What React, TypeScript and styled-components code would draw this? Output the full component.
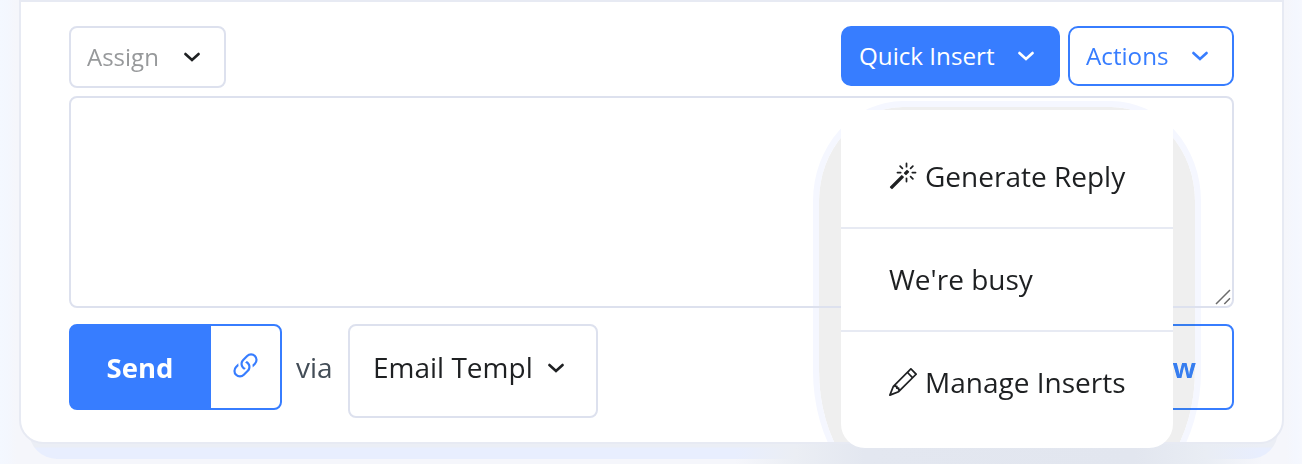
import React from "react";
import styled, { createGlobalStyle, css } from "styled-components";
import { BsLink45Deg, BsMagic, BsPencil } from "react-icons/bs";

const blue = "#377dff";
const line = "#dde1ee";

const GlobalStyle = createGlobalStyle`
  *, *::before, *::after { box-sizing: border-box; }
  html, body { margin: 0; height: 100%; overflow: hidden; }
  body {
    font-family: "Open Sans", "Noto Sans", sans-serif;
    color: #1e2022;
    background: linear-gradient(90deg, #f4f8ff 0, #f4f7fe 8px, #f5f6fb 16px, #f5f6fb 1286px, #f4f7fe 1296px, #f6f8fe 1302px);
  }
  button { font: inherit; cursor: pointer; }
`;

const Page = styled.main`
  position: relative;
  height: 464px;
  padding: 0 18px 0 19px;
  overflow: hidden;
`;

const CardShadow = styled.div`
  position: absolute;
  left: 29px;
  right: 24px;
  top: 400px;
  height: 59px;
  border-radius: 0 0 28px 28px;
  background: linear-gradient(180deg, #ebeef5 0 47px, #e8eefe 48px);
`;

const MenuShade = styled.div`
  position: absolute;
  left: 735px;
  right: 40px;
  top: 420px;
  height: 44px;
  background: linear-gradient(90deg, rgba(233, 237, 244, 0) 0, #ebeef4 60px, #e3e7f0 130px, #e2e6ef 400px, #e9edf4 470px, rgba(233, 237, 244, 0) 100%);
`;

const Card = styled.section`
  position: relative;
  height: 444px;
  padding: 24px 48px 0;
  border: 2px solid #e7eaf3;
  border-radius: 0 0 24px 24px;
  background: #fff;
`;

const Toolbar = styled.div`
  display: flex;
  justify-content: space-between;
  align-items: flex-start;
  height: 70px;
`;

const ButtonRow = styled.div`
  display: flex;
  gap: 8px;
`;

const Dropdown = styled.div`
  position: relative;
`;

const Select = styled.button<{ $large?: boolean }>`
  display: flex;
  align-items: center;
  white-space: nowrap;
  background: #fff;
  border: 2px solid ${line};
  border-radius: 8px;
  ${(p) =>
    p.$large
      ? css`
          width: 250px;
          height: 94px;
          padding: 0 23px 8px;
          gap: 14px;
          font-size: 28px;
          color: #1e2022;
        `
      : css`
          width: 157px;
          height: 62px;
          padding: 0 16px 2px;
          gap: 24px;
          font-size: 24px;
          color: #97999b;
        `}
`;

const ToolButton = styled.button<{ $solid?: boolean; $width: number }>`
  display: flex;
  align-items: center;
  gap: 22px;
  width: ${(p) => p.$width}px;
  height: 60px;
  padding: 0 16px 2px;
  font-size: 24.2px;
  white-space: nowrap;
  border: 2px solid ${blue};
  border-radius: 10px;
  background: ${(p) => (p.$solid ? blue : "#fff")};
  color: ${(p) => (p.$solid ? "#fff" : blue)};
`;

const Chevron = styled.svg<{ $dark?: boolean }>`
  width: 18px;
  height: 12px;
  flex: none;
  margin-top: 2px;
  fill: none;
  stroke: ${(p) => (p.$dark ? "#1e2022" : "currentColor")};
  stroke-width: 2.6;
  stroke-linecap: round;
  stroke-linejoin: miter;
`;

const EditorBox = styled.div`
  display: flex;
  justify-content: flex-end;
  align-items: flex-end;
  height: 212px;
  border: 2px solid ${line};
  border-radius: 8px;
`;

const ResizeGrip = styled.svg`
  width: 18px;
  height: 18px;
  stroke: #6c6c6c;
  stroke-width: 1.5;
  fill: none;
`;

const Footer = styled.div`
  display: flex;
  align-items: flex-start;
  padding-top: 16px;
`;

const SendGroup = styled.div`
  display: flex;
  width: 213px;
  height: 86px;
  border: 2px solid ${blue};
  border-radius: 8px;
  background: linear-gradient(90deg, ${blue} 142px, #fff 142px) border-box;
`;

const SendButton = styled.button`
  width: 140px;
  padding: 0 2px 0 0;
  border: 0;
  background: none;
  color: #fff;
  font-size: 27.5px;
  font-weight: 700;
`;

const LinkButton = styled.button`
  display: flex;
  flex: 1;
  align-items: center;
  justify-content: center;
  padding: 0 0 2px;
  border: 0;
  background: none;
  color: ${blue};
  svg {
    width: 35px;
    height: 35px;
    flex: none;
  }
`;

const Via = styled.span`
  width: 66px;
  padding-left: 14px;
  line-height: 87px;
  font-size: 28px;
  color: #434d57;
`;

const PreviewButton = styled.button`
  height: 86px;
  margin-left: auto;
  padding: 0 36px;
  border: 2px solid ${blue};
  border-radius: 8px;
  background: #fff;
  color: ${blue};
  font-size: 27.5px;
  font-weight: 700;
`;

const HaloClip = styled.div`
  position: absolute;
  inset: 0;
  overflow: hidden;
  border-radius: 0 0 22px 22px;
  pointer-events: none;
  mix-blend-mode: darken;
`;

const Halo = styled.div`
  position: absolute;
  left: 792px;
  top: 99px;
  width: 388px;
  height: 400px;
  border-radius: 90px / 100px 100px 130px 130px;
  border: 6px solid #f5f7ff;
  background: #efefef;
  background-clip: padding-box;
`;

const Menu = styled.div`
  position: absolute;
  top: 84px;
  left: 0;
  width: 332px;
  height: 338px;
  padding: 16px 0 15px;
  border-radius: 0 0 24px 24px;
  background: #fff;
  z-index: 2;
`;

const MenuItem = styled.div`
  display: flex;
  align-items: center;
  gap: 8px;
  height: 103px;
  padding: 0 48px 2px;
  font-size: 28px;
  white-space: nowrap;
  border-bottom: 2px solid #e7eaf3;
  svg { flex: none; }
  &:last-child { height: 101px; border-bottom: 0; }
`;

const Arrow = ({ dark }: { dark?: boolean }) => (
  <Chevron viewBox="0 0 18 12" $dark={dark}>
    <path d="M2.4 3 L9 9 L15.6 3" />
  </Chevron>
);

export default function App() {
  return (
    <>
      <GlobalStyle />
      <Page>
        <CardShadow />
        <MenuShade />
        <Card>
          <HaloClip>
            <Halo />
          </HaloClip>
          <Toolbar>
            <Select>
              Assign
              <Arrow dark />
            </Select>
            <ButtonRow>
              <Dropdown>
                <ToolButton $solid $width={219}>
                  Quick Insert
                  <Arrow />
                </ToolButton>
                <Menu>
                  <MenuItem>
                    <BsMagic />
                    Generate Reply
                  </MenuItem>
                  <MenuItem>We're busy</MenuItem>
                  <MenuItem>
                    <BsPencil />
                    Manage Inserts
                  </MenuItem>
                </Menu>
              </Dropdown>
              <ToolButton $width={166}>
                Actions
                <Arrow />
              </ToolButton>
            </ButtonRow>
          </Toolbar>
          <EditorBox>
            <ResizeGrip viewBox="0 0 18 18">
              <path d="M2 16 L16 2 M10.3 16 L16 10.3" />
            </ResizeGrip>
          </EditorBox>
          <Footer>
            <SendGroup>
              <SendButton>Send</SendButton>
              <LinkButton aria-label="Link">
                <BsLink45Deg />
              </LinkButton>
            </SendGroup>
            <Via>via</Via>
            <Select $large>
              Email Templ
              <Arrow dark />
            </Select>
            <PreviewButton>Preview</PreviewButton>
          </Footer>
        </Card>
      </Page>
    </>
  );
}
